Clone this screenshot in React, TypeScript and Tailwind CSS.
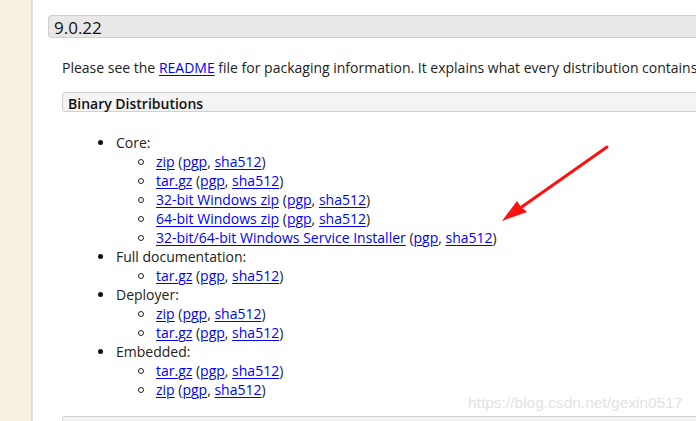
import React from 'react';

const A = ({ children }: { children: React.ReactNode }) => (
  <a href="#" className="text-[#0000ff] underline decoration-1 underline-offset-2">
    {children}
  </a>
);

interface Sub {
  label: string;
}

const groups: { title: string; items: Sub[] }[] = [
  {
    title: 'Core:',
    items: [
      { label: 'zip' },
      { label: 'tar.gz' },
      { label: '32-bit Windows zip' },
      { label: '64-bit Windows zip' },
      { label: '32-bit/64-bit Windows Service Installer' },
    ],
  },
  { title: 'Full documentation:', items: [{ label: 'tar.gz' }] },
  { title: 'Deployer:', items: [{ label: 'zip' }, { label: 'tar.gz' }] },
  { title: 'Embedded:', items: [{ label: 'tar.gz' }, { label: 'zip' }] },
];

function Row({ bullet, indent, children }: { bullet: 'disc' | 'circle'; indent: string; children: React.ReactNode }) {
  return (
    <div className={`flex h-[19px] items-center ${indent}`}>
      {bullet === 'disc' ? (
        <span className="h-[5px] w-[5px] rounded-full bg-[#111]" />
      ) : (
        <span className="h-[6px] w-[6px] rounded-full border border-[#222]" />
      )}
      <span className={bullet === 'disc' ? 'ml-[13px]' : 'ml-[12px]'}>{children}</span>
    </div>
  );
}

export default function App() {
  return (
    <div
      className="relative flex h-[421px] w-[696px] overflow-hidden bg-white text-[#222] text-[14px]"
      style={{ fontFamily: '"Open Sans", "Liberation Sans", sans-serif' }}
    >
      {/* left nav strip */}
      <div className="w-[33px] shrink-0 bg-[#f7f0e3] border-r-2 border-[#dcdcdc]" />

      {/* main column */}
      <div className="w-[800px] shrink-0 pl-[15px] pt-[15px]">
        <div className="rounded-l-[4px] border border-r-0 border-[#cfcfcf] bg-[#e8e8e8] pl-[5px] pt-[3px] pb-[1px] text-[17px] leading-[17px] text-[#111]">
          9.0.22
        </div>

        <div className="pl-[14px]">
          <p className="mt-[20px] leading-[19px] whitespace-nowrap">
            Please see the <A>README</A> file for packaging information. It explains what every distribution contains.
          </p>

          <div className="mt-[15px] rounded-l-[4px] border border-r-0 border-[#d0d0d0] bg-[#f4f4f4] pl-[5px] pt-[4px] font-semibold text-[14px] leading-[14px] text-[#111]">
            Binary Distributions
          </div>

          <div className="mt-[21px] leading-[19px] whitespace-nowrap">
            {groups.map((g) => (
              <div key={g.title}>
                <Row bullet="disc" indent="pl-[36px]">
                  {g.title}
                </Row>
                {g.items.map((it, i) => (
                  <Row key={i} bullet="circle" indent="pl-[76px]">
                    <A>{it.label}</A> (<A>pgp</A>, <A>sha512</A>)
                  </Row>
                ))}
              </div>
            ))}
          </div>

          <div className="mt-[17px] h-[20px] rounded-tl-[4px] border-l border-t border-[#d0d0d0] bg-[#f4f4f4]" />
        </div>
      </div>

      {/* red annotation arrow */}
      <svg className="pointer-events-none absolute left-0 top-0" width="696" height="421">
        <line x1="607" y1="147" x2="516" y2="211" stroke="#ff1010" strokeWidth="3" strokeLinecap="round" />
        <polygon points="502,221 517,201 521,207 527,212" fill="#ff1010" />
      </svg>

      {/* watermark */}
      <div
        className="pointer-events-none absolute left-[468px] top-[393px] text-[15.5px] leading-[20px] text-[#e2e2e2]"
        style={{ fontFamily: '"Liberation Sans", Arial, sans-serif' }}
      >
        https://blog.csdn.net/gexin0517
      </div>
    </div>
  );
}
